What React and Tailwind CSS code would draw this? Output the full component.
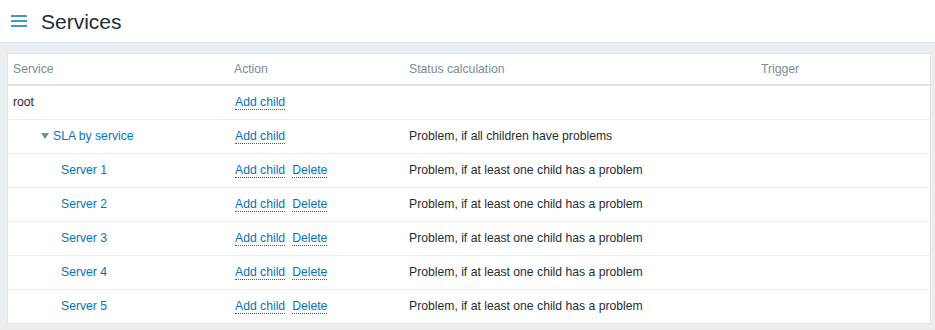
import React from 'react';

const rows = [
  { name: 'root', level: 0, del: false, status: '' },
  { name: 'SLA by service', level: 1, del: false, status: 'Problem, if all children have problems', toggle: true },
  { name: 'Server 1', level: 2, del: true, status: 'Problem, if at least one child has a problem' },
  { name: 'Server 2', level: 2, del: true, status: 'Problem, if at least one child has a problem' },
  { name: 'Server 3', level: 2, del: true, status: 'Problem, if at least one child has a problem' },
  { name: 'Server 4', level: 2, del: true, status: 'Problem, if at least one child has a problem' },
  { name: 'Server 5', level: 2, del: true, status: 'Problem, if at least one child has a problem' },
];

const Link = ({ children }) => (
  <a className="text-[#0275b8] border-b border-dotted border-[#0275b8] leading-[14px] cursor-pointer">
    {children}
  </a>
);

const ServiceCell = ({ row }) => {
  if (row.level === 0) return <span className="text-[#1f2c33]">{row.name}</span>;
  if (row.level === 1)
    return (
      <span className="flex items-center pl-[28px]">
        <svg width="8" height="6" viewBox="0 0 8 6" className="mr-[4px]">
          <path d="M0 0 H8 L4 6 Z" fill="#768d99" />
        </svg>
        <span className="text-[#0275b8]">{row.name}</span>
      </span>
    );
  return <span className="pl-[48px] text-[#0275b8]">{row.name}</span>;
};

export default function App() {
  return (
    <div className="w-[935px] h-[330px] bg-[#ebeef0] font-['Liberation_Sans',Arial,sans-serif] text-[12.2px] overflow-hidden">
      <header className="h-[43px] bg-white border-b border-[#dfe4e7] flex items-center">
        <div className="ml-[11px] flex flex-col gap-[3px] w-[16px]">
          <span className="h-[2px] bg-[#4796c4]" />
          <span className="h-[2px] bg-[#4796c4]" />
          <span className="h-[2px] bg-[#4796c4]" />
        </div>
        <h1 className="ml-[14px] text-[21px] text-[#1f2c33] leading-none">Services</h1>
      </header>
      <div className="pt-[10px] pl-[7px] pr-[4px]">
        <div className="bg-white border border-[#dfe4e7]">
          <table className="w-full border-collapse">
            <colgroup>
              <col className="w-[221px]" />
              <col className="w-[175px]" />
              <col className="w-[352px]" />
              <col />
            </colgroup>
            <thead>
              <tr className="h-[31px] border-b-2 border-[#dfe4e7] text-[#768d99] text-left">
                <th className="font-normal pl-[5px]">Service</th>
                <th className="font-normal pl-[5px]">Action</th>
                <th className="font-normal pl-[5px]">Status calculation</th>
                <th className="font-normal pl-[5px]">Trigger</th>
              </tr>
            </thead>
            <tbody>
              {rows.map((row, i) => (
                <tr key={row.name} className={`h-[34px] ${i < rows.length - 1 ? 'border-b border-[#ebeef0]' : ''}`}>
                  <td className="pl-[5px]"><ServiceCell row={row} /></td>
                  <td className="pl-[6px]">
                    <Link>Add child</Link>
                    {row.del && <span className="ml-[7px]"><Link>Delete</Link></span>}
                  </td>
                  <td className="pl-[5px] text-[#1f2c33]">{row.status}</td>
                  <td className="pl-[5px]" />
                </tr>
              ))}
            </tbody>
          </table>
        </div>
      </div>
    </div>
  );
}
